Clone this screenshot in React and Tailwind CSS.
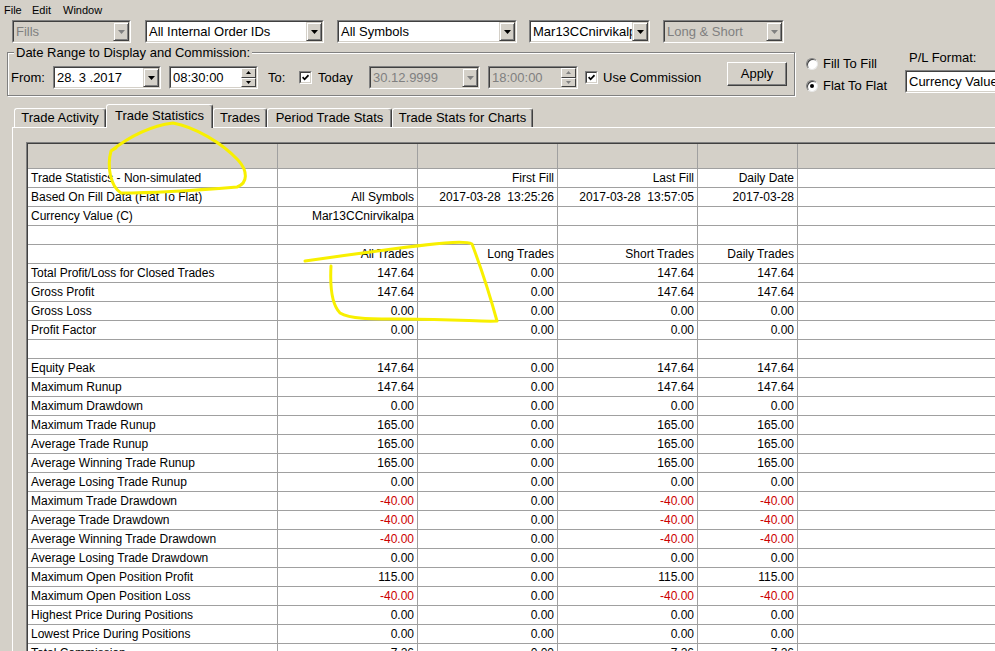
import React from "react";

const rows = [
  ["Trade Statistics - Non-simulated", "", "First Fill", "Last Fill", "Daily Date"],
  ["Based On Fill Data (Flat To Flat)", "All Symbols", "2017-03-28  13:25:26", "2017-03-28  13:57:05", "2017-03-28"],
  ["Currency Value (C)", "Mar13CCnirvikalpa", "", "", ""],
  ["", "", "", "", ""],
  ["", "All Trades", "Long Trades", "Short Trades", "Daily Trades"],
  ["Total Profit/Loss for Closed Trades", "147.64", "0.00", "147.64", "147.64"],
  ["Gross Profit", "147.64", "0.00", "147.64", "147.64"],
  ["Gross Loss", "0.00", "0.00", "0.00", "0.00"],
  ["Profit Factor", "0.00", "0.00", "0.00", "0.00"],
  ["", "", "", "", ""],
  ["Equity Peak", "147.64", "0.00", "147.64", "147.64"],
  ["Maximum Runup", "147.64", "0.00", "147.64", "147.64"],
  ["Maximum Drawdown", "0.00", "0.00", "0.00", "0.00"],
  ["Maximum Trade Runup", "165.00", "0.00", "165.00", "165.00"],
  ["Average Trade Runup", "165.00", "0.00", "165.00", "165.00"],
  ["Average Winning Trade Runup", "165.00", "0.00", "165.00", "165.00"],
  ["Average Losing Trade Runup", "0.00", "0.00", "0.00", "0.00"],
  ["Maximum Trade Drawdown", "-40.00", "0.00", "-40.00", "-40.00"],
  ["Average Trade Drawdown", "-40.00", "0.00", "-40.00", "-40.00"],
  ["Average Winning Trade Drawdown", "-40.00", "0.00", "-40.00", "-40.00"],
  ["Average Losing Trade Drawdown", "0.00", "0.00", "0.00", "0.00"],
  ["Maximum Open Position Profit", "115.00", "0.00", "115.00", "115.00"],
  ["Maximum Open Position Loss", "-40.00", "0.00", "-40.00", "-40.00"],
  ["Highest Price During Positions", "0.00", "0.00", "0.00", "0.00"],
  ["Lowest Price During Positions", "0.00", "0.00", "0.00", "0.00"],
  ["Total Commission", "7.26", "0.00", "7.26", "7.26"],
];

function Tri({ up, disabled, w = 7, h = 4 }) {
  const pts = up ? `0,${h} ${w},${h} ${w / 2},0` : `0,0 ${w},0 ${w / 2},${h}`;
  return (
    <svg width={w} height={h} viewBox={`0 0 ${w} ${h}`} className="block">
      <polygon points={pts} fill={disabled ? "#808080" : "#000"} />
    </svg>
  );
}

function Sunken({ className, inner, children }) {
  return (
    <div className={`shrink-0 border border-t-[#808080] border-l-[#808080] border-r-white border-b-white ${className}`}>
      <div className={`flex h-full border border-t-[#404040] border-l-[#404040] border-r-[#d4d0c8] border-b-[#d4d0c8] ${inner}`}>
        {children}
      </div>
    </div>
  );
}

function DropBtn({ disabled }) {
  return (
    <div className="w-[16px] h-full shrink-0 flex items-center justify-center bg-[#d4d0c8] border border-t-[#d4d0c8] border-l-[#d4d0c8] border-r-[#404040] border-b-[#404040] shadow-[inset_1px_1px_0_white,inset_-1px_-1px_0_#808080]">
      <Tri disabled={disabled} />
    </div>
  );
}

function Combo({ className, text, disabled }) {
  return (
    <Sunken className={`h-[23px] ${className}`} inner={disabled ? "bg-[#d4d0c8]" : "bg-white"}>
      <div className={`flex-1 min-w-0 overflow-hidden whitespace-pre flex items-center pl-[2px] text-[13px] ${disabled ? "text-[#808080]" : "text-black"}`}>
        {text}
      </div>
      <DropBtn disabled={disabled} />
    </Sunken>
  );
}

function SpinBtn({ up, disabled }) {
  return (
    <div className="flex-1 flex items-center justify-center bg-[#d4d0c8] border border-t-white border-l-white border-r-[#404040] border-b-[#404040]">
      <Tri up={up} disabled={disabled} w={5} h={3} />
    </div>
  );
}

function TimeBox({ className, text, disabled }) {
  return (
    <Sunken className={`h-[23px] ${className}`} inner={disabled ? "bg-[#d4d0c8]" : "bg-white"}>
      <div className={`flex-1 min-w-0 overflow-hidden whitespace-nowrap flex items-center pl-[2px] text-[13px] ${disabled ? "text-[#808080]" : "text-black"}`}>
        {text}
      </div>
      <div className="w-[15px] h-full flex flex-col">
        <SpinBtn up disabled={disabled} />
        <SpinBtn disabled={disabled} />
      </div>
    </Sunken>
  );
}

function Check() {
  return (
    <div className="w-[13px] h-[13px] shrink-0 border border-t-[#808080] border-l-[#808080] border-r-white border-b-white">
      <div className="w-full h-full bg-white border border-t-[#404040] border-l-[#404040] border-r-[#d4d0c8] border-b-[#d4d0c8] flex items-center justify-center">
        <svg width="7" height="7" viewBox="0 0 7 7" className="block">
          <path d="M0.6 3.2 L2.6 5.3 L6.5 1.2" stroke="#000" strokeWidth="1.7" fill="none" />
        </svg>
      </div>
    </div>
  );
}

function Radio({ checked, label }) {
  return (
    <div className="flex items-center h-[16px]">
      <div className="w-[12px] h-[12px] rounded-full bg-white border border-t-[#808080] border-l-[#808080] border-r-[#e8e8e8] border-b-[#e8e8e8] shadow-[inset_1px_1px_0_#404040] flex items-center justify-center">
        {checked && <div className="w-[4px] h-[4px] rounded-full bg-black" />}
      </div>
      <span className="ml-[5px] text-[13px]">{label}</span>
    </div>
  );
}

function Tab({ label, className, active }) {
  return (
    <div
      className={`${className} shrink-0 flex items-center justify-center text-[13px] whitespace-nowrap border-t border-l border-r border-t-white border-l-white border-r-[#404040] rounded-t-[3px] shadow-[inset_-1px_0_0_#808080] ${
        active ? "h-[24px] pb-[2px] relative z-10 mb-[-1px] bg-[#d4d0c8]" : "h-[19px]"
      }`}
    >
      {label}
    </div>
  );
}

function Cell({ className, value, left }) {
  const red = value.startsWith("-");
  return (
    <div
      className={`${className} shrink-0 h-full flex items-center whitespace-pre overflow-hidden border-r border-[#a0a0a0] ${
        left ? "pl-[3px]" : "justify-end pr-[3px]"
      } ${red ? "text-[#cc0000]" : "text-black"}`}
    >
      {value}
    </div>
  );
}

function StatsGrid() {
  return (
    <div className="flex-1 min-w-0 border-t border-l border-[#808080]">
      <div className="border-t border-l border-[#404040] text-[12px]">
        <div className="flex h-[25px] bg-[#d4d0c8] border-b border-[#a0a0a0]">
          <div className="w-[250px] shrink-0 border-r border-[#a0a0a0]" />
          <div className="w-[140px] shrink-0 border-r border-[#a0a0a0]" />
          <div className="w-[140px] shrink-0 border-r border-[#a0a0a0]" />
          <div className="w-[140px] shrink-0 border-r border-[#a0a0a0]" />
          <div className="w-[100px] shrink-0 border-r border-[#a0a0a0]" />
          <div className="flex-1" />
        </div>
        {rows.map((r, i) => (
          <div key={i} className="flex h-[19px] bg-white border-b border-[#a0a0a0]">
            <Cell className="w-[250px]" value={r[0]} left />
            <Cell className="w-[140px]" value={r[1]} />
            <Cell className="w-[140px]" value={r[2]} />
            <Cell className="w-[140px]" value={r[3]} />
            <Cell className="w-[100px]" value={r[4]} />
            <div className="flex-1" />
          </div>
        ))}
      </div>
    </div>
  );
}

export default function App() {
  return (
    <div className="relative w-[995px] h-[651px] overflow-hidden bg-[#d4d0c8] text-black font-['Liberation_Sans',Arial,sans-serif] flex flex-col">
      {/* menu */}
      <div className="h-[20px] shrink-0 flex items-center pl-[4px] text-[11px]">
        <span className="w-[28px]">File</span>
        <span className="w-[31px]">Edit</span>
        <span>Window</span>
      </div>

      {/* filters */}
      <div className="h-[23px] shrink-0 flex pl-[12px]">
        <Combo className="w-[119px]" text="Fills" disabled />
        <Combo className="w-[179px] ml-[14px]" text="All Internal Order IDs" />
        <Combo className="w-[180px] ml-[13px]" text="All Symbols" />
        <Combo className="w-[121px] ml-[12px]" text="Mar13CCnirvikalpa" />
        <Combo className="w-[121px] ml-[13px]" text="Long & Short" disabled />
      </div>

      {/* date range row */}
      <div className="shrink-0 flex mt-[2px]">
        <fieldset className="ml-[7px] w-[788px] shrink-0 border border-[#808080] shadow-[1px_1px_0_white,inset_1px_1px_0_white]">
          <legend className="ml-[6px] px-[2px] bg-[#d4d0c8] text-[13px] leading-[15px]">
            Date Range to Display and Commission:
          </legend>
          <div className="flex items-start h-[35px] text-[13px]">
            <div className="w-[45px] pl-[3px] h-[23px] mt-[6px] flex items-center">From:</div>
            <Combo className="w-[108px] mt-[6px]" text="28. 3 .2017" />
            <TimeBox className="w-[89px] ml-[8px] mt-[6px]" text="08:30:00" />
            <div className="w-[31px] ml-[10px] h-[23px] mt-[6px] flex items-center">To:</div>
            <div className="h-[23px] mt-[6px] flex items-center">
              <Check />
            </div>
            <div className="w-[57px] pl-[6px] h-[23px] mt-[6px] flex items-center">Today</div>
            <Combo className="w-[111px] mt-[6px]" text="30.12.9999" disabled />
            <TimeBox className="w-[90px] ml-[8px] mt-[6px]" text="18:00:00" disabled />
            <div className="ml-[7px] h-[23px] mt-[6px] flex items-center">
              <Check />
            </div>
            <div className="w-[129px] pl-[5px] h-[23px] mt-[6px] flex items-center">Use Commission</div>
            <div className="mt-[2px] w-[60px] h-[24px] shrink-0 flex items-center justify-center bg-[#d4d0c8] border border-t-white border-l-white border-r-[#404040] border-b-[#404040] shadow-[inset_-1px_-1px_0_#808080]">
              Apply
            </div>
          </div>
        </fieldset>

        <div className="ml-[11px] w-[99px] shrink-0 pt-[11px] flex flex-col gap-[6px]">
          <Radio label="Fill To Fill" />
          <Radio label="Flat To Flat" checked />
        </div>

        <div className="flex flex-col shrink-0">
          <div className="mt-[5px] ml-[4px] h-[15px] leading-[15px] text-[13px]">P/L Format:</div>
          <Combo className="w-[120px] mt-[5px]" text="Currency Value" />
        </div>
      </div>

      {/* tabs */}
      <div className="h-[23px] shrink-0 mt-[8px] flex items-end pl-[14px]">
        <Tab className="w-[92px]" label="Trade Activity" />
        <Tab className="w-[107px]" label="Trade Statistics" active />
        <Tab className="w-[54px]" label="Trades" />
        <Tab className="w-[125px]" label="Period Trade Stats" />
        <Tab className="w-[141px]" label="Trade Stats for Charts" />
      </div>

      {/* panel */}
      <div className="flex-1 min-h-0 ml-[12px] border-t border-l border-white flex pl-[13px] pt-[14px]">
        <StatsGrid />
      </div>

      {/* hand-drawn marker annotations */}
      <svg className="absolute inset-0 pointer-events-none z-20" width="995" height="651" viewBox="0 0 995 651">
        <path
          d="M116,148 L111,151 C130,136 150,126 173,123 C195,127 222,143 238,160 C248,171 248,183 237,187 C200,190 150,193 121,193 C110,186 107,166 111,151"
          stroke="#f8f000"
          strokeWidth="3"
          fill="none"
          strokeLinecap="round"
          strokeLinejoin="round"
        />
        <path
          d="M305,261 C350,255 400,247 445,243 C458,242 468,242 472,244 C480,265 489,292 497,321 C480,322 460,319 400,319 C370,319 350,319 340,313 C332,305 330,285 331,266"
          stroke="#f8f000"
          strokeWidth="3"
          fill="none"
          strokeLinecap="round"
          strokeLinejoin="round"
        />
      </svg>
    </div>
  );
}
